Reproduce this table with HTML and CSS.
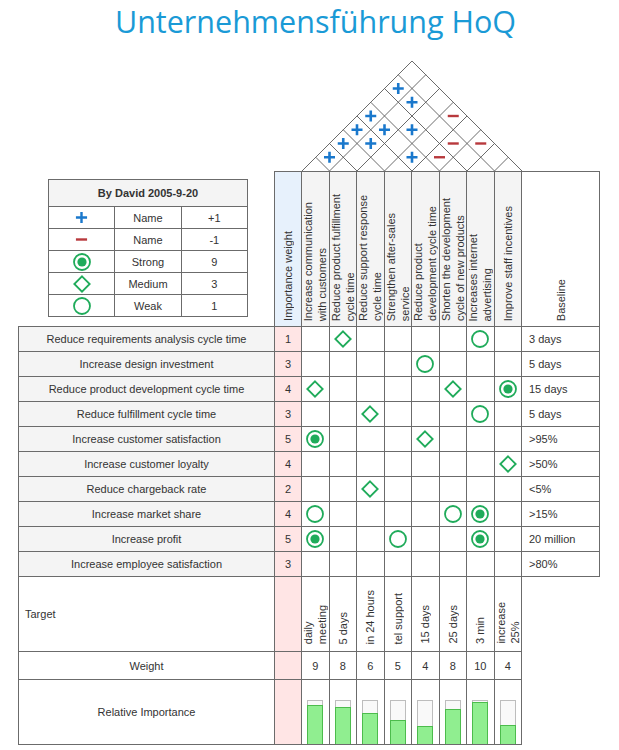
FILE: index.html
```html
<!DOCTYPE html>
<html>
<head>
<meta charset="utf-8">
<link rel="stylesheet" href="styles.css">
</head>
<body>
<div class="page">
  <h1 class="title">Unternehmensführung HoQ</h1>
  <div class="hoq">
    <div class="legend-wrap">
      <table class="legend">
        <tr><th colspan="3">By David 2005-9-20</th></tr>
        <tr><td class="c-ico"><svg class="ico" viewBox="0 0 14 14"><path d="M1 7H13M7 1V13" stroke="#1a78cc" stroke-width="2.6" fill="none"/></svg></td><td class="c-name">Name</td><td class="c-val">+1</td></tr>
        <tr><td class="c-ico"><svg class="ico" viewBox="0 0 14 14"><path d="M1 7H13" stroke="#b8393d" stroke-width="2.6" fill="none"/></svg></td><td class="c-name">Name</td><td class="c-val">-1</td></tr>
        <tr><td class="c-ico"><svg class="sym" viewBox="0 0 18 18"><circle cx="9" cy="9" r="8" fill="none" stroke="#1fab5a" stroke-width="1.8"/><circle cx="9" cy="9" r="4.6" fill="#1fab5a"/></svg></td><td class="c-name">Strong</td><td class="c-val">9</td></tr>
        <tr><td class="c-ico"><svg class="sym" viewBox="0 0 18 18"><path d="M9 1.3L16.7 9L9 16.7L1.3 9Z" fill="none" stroke="#1fab5a" stroke-width="1.8"/></svg></td><td class="c-name">Medium</td><td class="c-val">3</td></tr>
        <tr><td class="c-ico"><svg class="sym" viewBox="0 0 18 18"><circle cx="9" cy="9" r="8" fill="none" stroke="#1fab5a" stroke-width="1.8"/></svg></td><td class="c-name">Weak</td><td class="c-val">1</td></tr>
      </table>
    </div>
    <div class="roof">
      <svg width="220" height="110" viewBox="0 0 220 110">
        <g stroke="#5a5a5a" stroke-width="0.9" fill="none">
          <path d="M0 110L110 0M27.5 110L123.75 13.75M55 110L137.5 27.5M82.5 110L151.25 41.25M110 110L165 55M137.5 110L178.75 68.75M165 110L192.5 82.5M192.5 110L206.25 96.25"/>
          <path d="M27.5 110L13.75 96.25M55 110L27.5 82.5M82.5 110L41.25 68.75M110 110L55 55M137.5 110L68.75 41.25M165 110L82.5 27.5M192.5 110L96.25 13.75M220 110L110 0"/>
        </g>
        <g stroke="#1a78cc" stroke-width="2.6" fill="none">
          <path d="M90.75 27.5h11M96.25 22v11"/>
          <path d="M104.5 41.25h11M110 35.75v11"/>
          <path d="M63.25 55h11M68.75 49.5v11"/>
          <path d="M49.5 68.75h11M55 63.25v11"/>
          <path d="M77 68.75h11M82.5 63.25v11"/>
          <path d="M104.5 68.75h11M110 63.25v11"/>
          <path d="M35.75 82.5h11M41.25 77v11"/>
          <path d="M63.25 82.5h11M68.75 77v11"/>
          <path d="M22 96.25h11M27.5 90.75v11"/>
          <path d="M104.5 96.25h11M110 90.75v11"/>
        </g>
        <g stroke="#b8393d" stroke-width="2.4" fill="none">
          <path d="M145.75 55h11"/>
          <path d="M145.75 82.5h11"/>
          <path d="M173.25 82.5h11"/>
          <path d="M132 96.25h11"/>
        </g>
      </svg>
    </div>

    <div class="hd hd-imp"><span class="vt">Importance weight</span></div>
    <div class="hd"><span class="vt">Increase communication<br>with customers</span></div>
    <div class="hd"><span class="vt">Reduce product fulfillment<br>cycle time</span></div>
    <div class="hd"><span class="vt">Reduce support response<br>cycle time</span></div>
    <div class="hd"><span class="vt">Strengthen after-sales<br>service</span></div>
    <div class="hd"><span class="vt">Reduce product<br>development cycle time</span></div>
    <div class="hd"><span class="vt">Shorten the development<br>cycle of new products</span></div>
    <div class="hd"><span class="vt">Increases internet<br>advertising</span></div>
    <div class="hd"><span class="vt">Improve staff incentives</span></div>
    <div class="hd hd-base"><span class="vt">Baseline</span></div>

    <!-- row 1 -->
    <div class="lab r1">Reduce requirements analysis cycle time</div>
    <div class="imp r1">1</div>
    <div class="rel r1"></div>
    <div class="rel r1"><svg class="sym" viewBox="0 0 18 18"><path d="M9 1.3L16.7 9L9 16.7L1.3 9Z" fill="none" stroke="#1fab5a" stroke-width="1.8"/></svg></div>
    <div class="rel r1"></div>
    <div class="rel r1"></div>
    <div class="rel r1"></div>
    <div class="rel r1"></div>
    <div class="rel r1"><svg class="sym" viewBox="0 0 18 18"><circle cx="9" cy="9" r="8" fill="none" stroke="#1fab5a" stroke-width="1.8"/></svg></div>
    <div class="rel r1"></div>
    <div class="base r1">3 days</div>

    <!-- row 2 -->
    <div class="lab">Increase design investment</div>
    <div class="imp">3</div>
    <div class="rel"></div>
    <div class="rel"></div>
    <div class="rel"></div>
    <div class="rel"></div>
    <div class="rel"><svg class="sym" viewBox="0 0 18 18"><circle cx="9" cy="9" r="8" fill="none" stroke="#1fab5a" stroke-width="1.8"/></svg></div>
    <div class="rel"></div>
    <div class="rel"></div>
    <div class="rel"></div>
    <div class="base">5 days</div>

    <!-- row 3 -->
    <div class="lab">Reduce product development cycle time</div>
    <div class="imp">4</div>
    <div class="rel"><svg class="sym" viewBox="0 0 18 18"><path d="M9 1.3L16.7 9L9 16.7L1.3 9Z" fill="none" stroke="#1fab5a" stroke-width="1.8"/></svg></div>
    <div class="rel"></div>
    <div class="rel"></div>
    <div class="rel"></div>
    <div class="rel"></div>
    <div class="rel"><svg class="sym" viewBox="0 0 18 18"><path d="M9 1.3L16.7 9L9 16.7L1.3 9Z" fill="none" stroke="#1fab5a" stroke-width="1.8"/></svg></div>
    <div class="rel"></div>
    <div class="rel"><svg class="sym" viewBox="0 0 18 18"><circle cx="9" cy="9" r="8" fill="none" stroke="#1fab5a" stroke-width="1.8"/><circle cx="9" cy="9" r="4.6" fill="#1fab5a"/></svg></div>
    <div class="base">15 days</div>

    <!-- row 4 -->
    <div class="lab">Reduce fulfillment cycle time</div>
    <div class="imp">3</div>
    <div class="rel"></div>
    <div class="rel"></div>
    <div class="rel"><svg class="sym" viewBox="0 0 18 18"><path d="M9 1.3L16.7 9L9 16.7L1.3 9Z" fill="none" stroke="#1fab5a" stroke-width="1.8"/></svg></div>
    <div class="rel"></div>
    <div class="rel"></div>
    <div class="rel"></div>
    <div class="rel"><svg class="sym" viewBox="0 0 18 18"><circle cx="9" cy="9" r="8" fill="none" stroke="#1fab5a" stroke-width="1.8"/></svg></div>
    <div class="rel"></div>
    <div class="base">5 days</div>

    <!-- row 5 -->
    <div class="lab">Increase customer satisfaction</div>
    <div class="imp">5</div>
    <div class="rel"><svg class="sym" viewBox="0 0 18 18"><circle cx="9" cy="9" r="8" fill="none" stroke="#1fab5a" stroke-width="1.8"/><circle cx="9" cy="9" r="4.6" fill="#1fab5a"/></svg></div>
    <div class="rel"></div>
    <div class="rel"></div>
    <div class="rel"></div>
    <div class="rel"><svg class="sym" viewBox="0 0 18 18"><path d="M9 1.3L16.7 9L9 16.7L1.3 9Z" fill="none" stroke="#1fab5a" stroke-width="1.8"/></svg></div>
    <div class="rel"></div>
    <div class="rel"></div>
    <div class="rel"></div>
    <div class="base">&gt;95%</div>

    <!-- row 6 -->
    <div class="lab">Increase customer loyalty</div>
    <div class="imp">4</div>
    <div class="rel"></div>
    <div class="rel"></div>
    <div class="rel"></div>
    <div class="rel"></div>
    <div class="rel"></div>
    <div class="rel"></div>
    <div class="rel"></div>
    <div class="rel"><svg class="sym" viewBox="0 0 18 18"><path d="M9 1.3L16.7 9L9 16.7L1.3 9Z" fill="none" stroke="#1fab5a" stroke-width="1.8"/></svg></div>
    <div class="base">&gt;50%</div>

    <!-- row 7 -->
    <div class="lab">Reduce chargeback rate</div>
    <div class="imp">2</div>
    <div class="rel"></div>
    <div class="rel"></div>
    <div class="rel"><svg class="sym" viewBox="0 0 18 18"><path d="M9 1.3L16.7 9L9 16.7L1.3 9Z" fill="none" stroke="#1fab5a" stroke-width="1.8"/></svg></div>
    <div class="rel"></div>
    <div class="rel"></div>
    <div class="rel"></div>
    <div class="rel"></div>
    <div class="rel"></div>
    <div class="base">&lt;5%</div>

    <!-- row 8 -->
    <div class="lab">Increase market share</div>
    <div class="imp">4</div>
    <div class="rel"><svg class="sym" viewBox="0 0 18 18"><circle cx="9" cy="9" r="8" fill="none" stroke="#1fab5a" stroke-width="1.8"/></svg></div>
    <div class="rel"></div>
    <div class="rel"></div>
    <div class="rel"></div>
    <div class="rel"></div>
    <div class="rel"><svg class="sym" viewBox="0 0 18 18"><circle cx="9" cy="9" r="8" fill="none" stroke="#1fab5a" stroke-width="1.8"/></svg></div>
    <div class="rel"><svg class="sym" viewBox="0 0 18 18"><circle cx="9" cy="9" r="8" fill="none" stroke="#1fab5a" stroke-width="1.8"/><circle cx="9" cy="9" r="4.6" fill="#1fab5a"/></svg></div>
    <div class="rel"></div>
    <div class="base">&gt;15%</div>

    <!-- row 9 -->
    <div class="lab">Increase profit</div>
    <div class="imp">5</div>
    <div class="rel"><svg class="sym" viewBox="0 0 18 18"><circle cx="9" cy="9" r="8" fill="none" stroke="#1fab5a" stroke-width="1.8"/><circle cx="9" cy="9" r="4.6" fill="#1fab5a"/></svg></div>
    <div class="rel"></div>
    <div class="rel"></div>
    <div class="rel"><svg class="sym" viewBox="0 0 18 18"><circle cx="9" cy="9" r="8" fill="none" stroke="#1fab5a" stroke-width="1.8"/></svg></div>
    <div class="rel"></div>
    <div class="rel"></div>
    <div class="rel"><svg class="sym" viewBox="0 0 18 18"><circle cx="9" cy="9" r="8" fill="none" stroke="#1fab5a" stroke-width="1.8"/><circle cx="9" cy="9" r="4.6" fill="#1fab5a"/></svg></div>
    <div class="rel"></div>
    <div class="base">20 million</div>

    <!-- row 10 -->
    <div class="lab">Increase employee satisfaction</div>
    <div class="imp">3</div>
    <div class="rel"></div>
    <div class="rel"></div>
    <div class="rel"></div>
    <div class="rel"></div>
    <div class="rel"></div>
    <div class="rel"></div>
    <div class="rel"></div>
    <div class="rel"></div>
    <div class="base">&gt;80%</div>

    <!-- target -->
    <div class="lab plain target">Target</div>
    <div class="imp"></div>
    <div class="rel tgt"><span class="vt">daily<br>meeting</span></div>
    <div class="rel tgt"><span class="vt">5 days</span></div>
    <div class="rel tgt"><span class="vt">in 24 hours</span></div>
    <div class="rel tgt"><span class="vt">tel support</span></div>
    <div class="rel tgt"><span class="vt">15 days</span></div>
    <div class="rel tgt"><span class="vt">25 days</span></div>
    <div class="rel tgt"><span class="vt">3 min</span></div>
    <div class="rel tgt"><span class="vt">increase<br>25%</span></div>
    <div class="void"></div>

    <!-- weight -->
    <div class="lab plain">Weight</div>
    <div class="imp"></div>
    <div class="rel">9</div>
    <div class="rel">8</div>
    <div class="rel">6</div>
    <div class="rel">5</div>
    <div class="rel">4</div>
    <div class="rel">8</div>
    <div class="rel">10</div>
    <div class="rel">4</div>
    <div class="void"></div>

    <!-- relative importance -->
    <div class="lab plain">Relative Importance</div>
    <div class="imp"></div>
    <div class="rel bars"><div class="bar"><div class="fill" style="height:39px"></div></div></div>
    <div class="rel bars"><div class="bar"><div class="fill" style="height:37px"></div></div></div>
    <div class="rel bars"><div class="bar"><div class="fill" style="height:31px"></div></div></div>
    <div class="rel bars"><div class="bar"><div class="fill" style="height:24px"></div></div></div>
    <div class="rel bars"><div class="bar"><div class="fill" style="height:18px"></div></div></div>
    <div class="rel bars"><div class="bar"><div class="fill" style="height:35px"></div></div></div>
    <div class="rel bars"><div class="bar"><div class="fill" style="height:42px"></div></div></div>
    <div class="rel bars"><div class="bar"><div class="fill" style="height:19px"></div></div></div>
    <div class="void"></div>
  </div>
</div>
</body>
</html>
```

FILE: styles.css
```css
html, body {
  margin: 0;
  padding: 0;
  background: #ffffff;
}

body {
  font-family: "Liberation Sans", Arial, sans-serif;
  font-size: 11px;
  color: #333333;
}

.page {
  padding-left: 18px;
}

.title {
  margin: 0;
  padding-right: 6px;
  height: 42px;
  line-height: 42px;
  font-family: "Open Sans", "Noto Sans", sans-serif;
  font-size: 30.5px;
  font-weight: normal;
  color: #1a9ad6;
  text-align: center;
}

.hoq {
  margin-top: 19px;
  display: grid;
  grid-template-columns: 256px 28px repeat(8, 27.5px) 78px;
  grid-template-rows: 110px 155px 26px repeat(9, 25px) 75px 28px 65px;
}

.hoq > div {
  box-sizing: border-box;
  display: flex;
  align-items: center;
  justify-content: center;
}

/* legend */
.hoq > .legend-wrap {
  grid-column: 1;
  grid-row: 1 / 3;
  align-items: flex-end;
  justify-content: flex-start;
  padding: 0 0 9px 30px;
}

.legend {
  border-collapse: collapse;
  table-layout: fixed;
  width: 200px;
  font-size: 11px;
  color: #333333;
}

.legend th,
.legend td {
  border: 1px solid #6b6b6b;
  padding: 0;
  text-align: center;
  vertical-align: middle;
  font-weight: normal;
}

.legend th {
  height: 26px;
  background: #f4f4f4;
  font-weight: bold;
}

.legend td {
  height: 21px;
}

.legend .c-ico {
  width: 41px;
}

.legend .c-name {
  width: 112px;
}

.legend .c-val {
  width: 43px;
}

.ico {
  width: 13px;
  height: 13px;
  display: block;
  margin: 0 auto;
}

.sym {
  width: 18px;
  height: 18px;
  display: block;
  margin: 0 auto;
}

/* roof */
.hoq > .roof {
  grid-column: 2 / -1;
  grid-row: 1;
  justify-content: flex-start;
  align-items: flex-end;
}

.roof svg {
  display: block;
  margin-left: 28px;
}

/* header */
.hoq > .hd {
  grid-row: 2;
  border-top: 1px solid #6b6b6b;
  border-right: 1px solid #6b6b6b;
  background: #f4f4f4;
  align-items: flex-end;
  padding-bottom: 5px;
}

.hoq > .hd-imp {
  border-left: 1px solid #6b6b6b;
  background: #e7f1fc;
}

.hoq > .hd-base {
  background: #ffffff;
}

.vt {
  writing-mode: vertical-rl;
  transform: rotate(180deg);
  white-space: nowrap;
  line-height: 14px;
}

/* body cells */
.lab {
  border-left: 1px solid #6b6b6b;
  border-bottom: 1px solid #6b6b6b;
  background: #f4f4f4;
}

.lab.plain {
  background: #ffffff;
}

.hoq > .lab.target {
  justify-content: flex-start;
  padding-left: 6px;
}

.imp {
  border-left: 1px solid #6b6b6b;
  border-right: 1px solid #6b6b6b;
  border-bottom: 1px solid #6b6b6b;
  background: #ffe5e5;
}

.rel {
  border-right: 1px solid #6b6b6b;
  border-bottom: 1px solid #6b6b6b;
}

.hoq > .base {
  border-right: 1px solid #6b6b6b;
  border-bottom: 1px solid #6b6b6b;
  justify-content: flex-start;
  padding-left: 7px;
}

.r1 {
  border-top: 1px solid #6b6b6b;
}

.hoq > .tgt {
  align-items: flex-end;
  padding-bottom: 7px;
}

.hoq > .bars {
  align-items: flex-end;
}

.bar {
  box-sizing: border-box;
  width: 16px;
  height: 44px;
  border: 1px solid #bdbdbd;
  border-bottom: none;
  background: #f9f9f9;
  display: flex;
  align-items: flex-end;
}

.fill {
  box-sizing: border-box;
  flex: none;
  width: 16px;
  margin: 0 -1px;
  background: #90ee90;
  border: 1px solid #4cbc4c;
  border-bottom: none;
}
```
